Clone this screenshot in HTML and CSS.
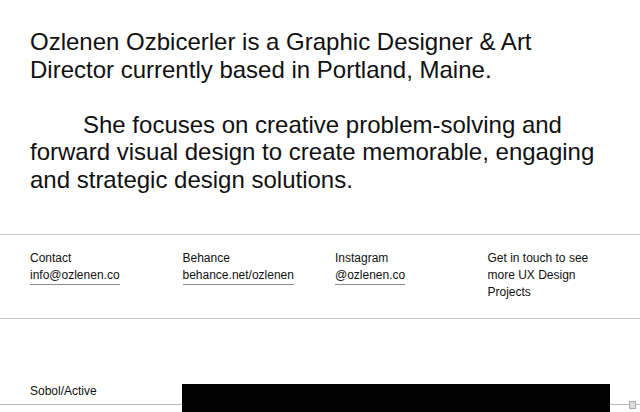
FILE: index.html
```html
<!DOCTYPE html>
<html>
<head>
<meta charset="utf-8">
<link rel="stylesheet" href="styles.css">
</head>
<body>
<section class="intro">
  <p>Ozlenen Ozbicerler is a Graphic Designer &amp; Art Director currently based in Portland, Maine.</p>
  <p class="indent">She focuses on creative problem-solving and forward visual design to create memorable, engaging and strategic design solutions.</p>
</section>
<section class="contact">
  <div class="col"><div>Contact</div><a class="link">info@ozlenen.co</a></div>
  <div class="col"><div>Behance</div><a class="link">behance.net/ozlenen</a></div>
  <div class="col"><div>Instagram</div><a class="link">@ozlenen.co</a></div>
  <div class="col note">Get in touch to see more UX Design Projects</div>
</section>
<section class="project">
  <div class="label">Sobol/Active</div>
  <div class="shot"></div>
  <span class="handle"></span>
</section>
</body>
</html>
```
FILE: styles.css
```css
html, body {
  margin: 0;
  padding: 0;
  background: #fff;
  color: #111;
  font-family: "Liberation Sans", Arial, sans-serif;
  overflow: hidden;
}
.intro {
  padding: 28px 30px 0 30px;
  font-size: 24px;
  line-height: 27.6px;
  height: 206px;
  border-bottom: 1px solid #c8c8c8;
}
.intro p {
  margin: 0;
}
.intro p + p {
  margin-top: 27.6px;
}
.indent {
  text-indent: 53px;
}
.contact {
  display: grid;
  grid-template-columns: repeat(4, 152.5px);
  padding: 15px 0 16px 30px;
  font-size: 12px;
  line-height: 17px;
  height: 52px;
  border-bottom: 1px solid #c8c8c8;
}
.link {
  display: inline-block;
  color: #111;
  text-decoration: none;
  border-bottom: 1px solid #8a8a8a;
  line-height: 16px;
  padding-bottom: 1px;
}
.note {
  padding-right: 40px;
}
.project {
  position: relative;
  display: grid;
  grid-template-columns: 152px 428px;
  padding: 64px 0 0 30px;
  font-size: 12px;
  line-height: 17px;
}
.project::before {
  content: "";
  position: absolute;
  left: 0;
  right: 0;
  top: 85px;
  height: 1px;
  background: #bdbdbd;
}
.label {
  position: relative;
}
.shot {
  position: relative;
  z-index: 1;
  height: 200px;
  margin-top: 1px;
  background: #000;
}
.handle {
  position: absolute;
  left: 629px;
  top: 82px;
  width: 5px;
  height: 6px;
  border: 1px solid #aaa;
  background: #ddd;
}
```
